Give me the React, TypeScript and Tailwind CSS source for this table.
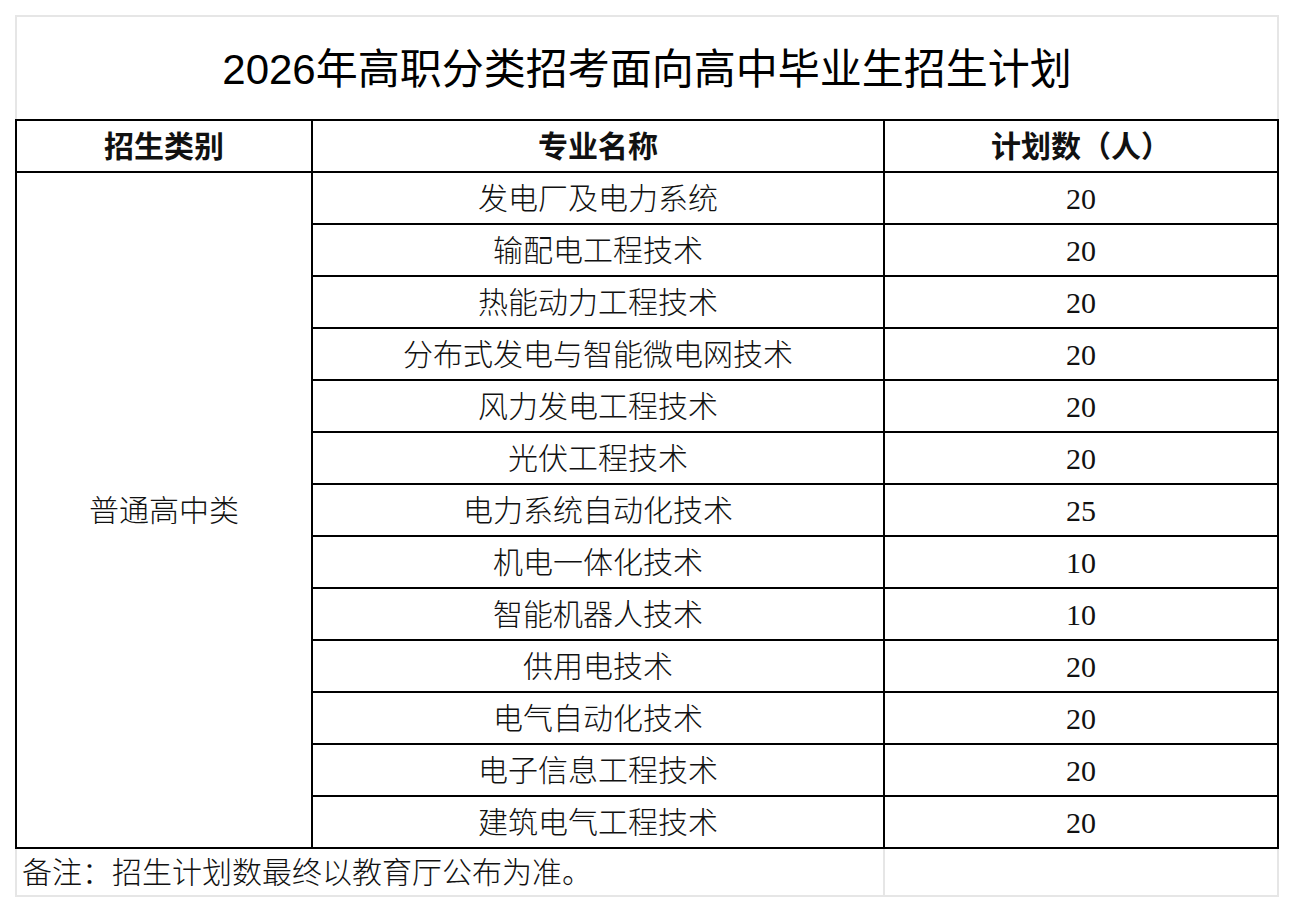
import React from 'react'

const rows: [string, string][] = [
  ['发电厂及电力系统', '20'],
  ['输配电工程技术', '20'],
  ['热能动力工程技术', '20'],
  ['分布式发电与智能微电网技术', '20'],
  ['风力发电工程技术', '20'],
  ['光伏工程技术', '20'],
  ['电力系统自动化技术', '25'],
  ['机电一体化技术', '10'],
  ['智能机器人技术', '10'],
  ['供用电技术', '20'],
  ['电气自动化技术', '20'],
  ['电子信息工程技术', '20'],
  ['建筑电气工程技术', '20'],
]

const body = "font-['Liberation_Serif','Noto_Sans_CJK_SC',serif]"

export default function App() {
  return (
    <div className="min-h-screen bg-white pt-[15px] pl-[15px]">
      <div className="w-[1264px]">
        <div className="flex h-[104px] items-center justify-center border-2 border-b-0 border-[#e6e6e6] pt-[3px]">
          <h1 className="font-['Liberation_Sans','Noto_Sans_CJK_SC',sans-serif] text-[42px] text-black">
            2026年高职分类招考面向高中毕业生招生计划
          </h1>
        </div>
        <table className={`w-[1262px] table-fixed border-collapse text-[30px] font-light text-[#111] ${body}`}>
          <colgroup>
            <col className="w-[296px]" />
            <col className="w-[572px]" />
            <col className="w-[394px]" />
          </colgroup>
          <thead>
            <tr className="h-[52px]">
              <th className="border-2 border-black p-0 text-center font-bold">招生类别</th>
              <th className="border-2 border-black p-0 text-center font-bold">专业名称</th>
              <th className="border-2 border-black p-0 text-center font-bold">计划数（人）</th>
            </tr>
          </thead>
          <tbody>
            {rows.map(([name, num], i) => (
              <tr key={name} className="h-[52px]">
                {i === 0 && (
                  <td rowSpan={rows.length} className="border-2 border-black p-0 text-center">
                    普通高中类
                  </td>
                )}
                <td className="border-2 border-black p-0 text-center">{name}</td>
                <td className="border-2 border-black p-0 text-center">{num}</td>
              </tr>
            ))}
            <tr className="h-[48px]">
              <td colSpan={2} className="border-2 border-[#e6e6e6] px-[5px] py-0 text-left">
                备注：招生计划数最终以教育厅公布为准。
              </td>
              <td className="border-2 border-[#e6e6e6] p-0"></td>
            </tr>
          </tbody>
        </table>
      </div>
    </div>
  )
}
